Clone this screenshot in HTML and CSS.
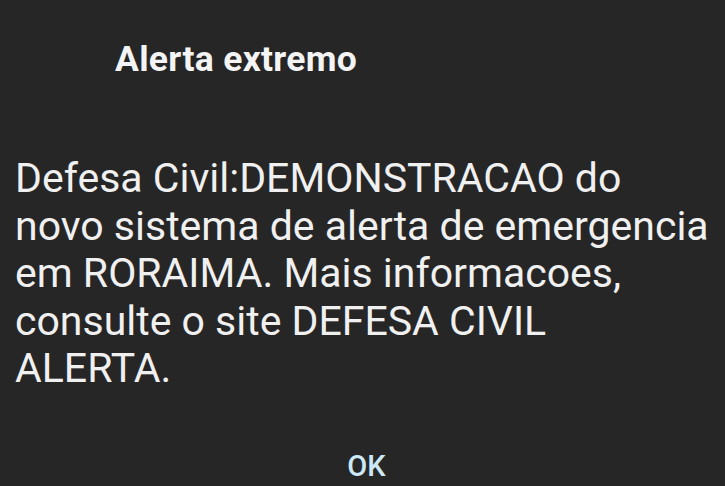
FILE: index.html
```html
<!DOCTYPE html>
<html>
<head>
<meta charset="utf-8">
<link rel="stylesheet" href="styles.css">
</head>
<body>
<div class="dialog">
  <h1 class="title">Alerta extremo</h1>
  <p class="message">Defesa Civil:DEMONSTRACAO do<br>novo sistema de alerta de emergencia<br>em RORAIMA. Mais informacoes,<br>consulte o site DEFESA CIVIL<br>ALERTA.</p>
  <div class="actions"><span class="ok">OK</span></div>
</div>
</body>
</html>
```
FILE: styles.css
```css
html, body {
  margin: 0;
  padding: 0;
  background: #262626;
}
body {
  width: 725px;
  height: 486px;
  overflow: hidden;
  font-family: Roboto, "Noto Sans", sans-serif;
}
.dialog {
  display: flex;
  flex-direction: column;
  height: 486px;
}
.title {
  margin: 0;
  padding: 38px 0 0 115px;
  font-size: 35.5px;
  font-weight: 700;
  line-height: 42px;
  letter-spacing: 0.3px;
  color: #f4f4f4;
}
.message {
  margin: 0;
  padding: 75px 0 0 15px;
  font-size: 41px;
  line-height: 47.5px;
  color: #f0f0f0;
  font-weight: 400;
  white-space: nowrap;
}
.actions {
  margin-top: auto;
  display: flex;
  justify-content: center;
  padding: 0 0 3px 0;
}
.ok {
  font-size: 29px;
  font-weight: 500;
  line-height: 34px;
  color: #cde8f6;
  margin-left: 8px;
}
```
